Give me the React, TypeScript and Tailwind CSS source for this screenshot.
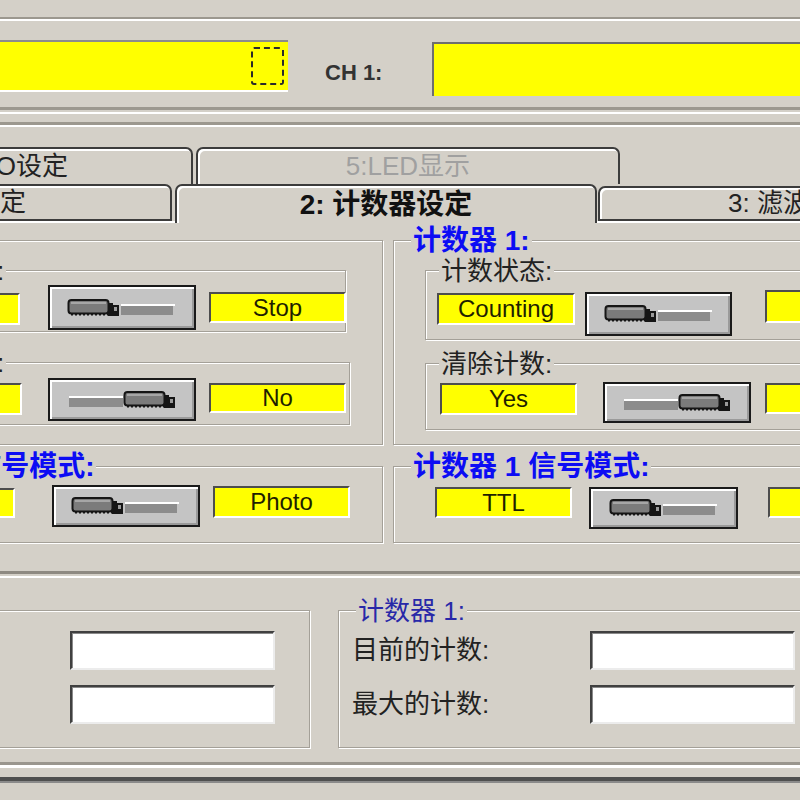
import React from "react";

const BG = "bg-[#d4d0c8]";

type BoxProps = {
  className?: string;
  children?: React.ReactNode;
};

const Slider = ({ on }: { on?: boolean }) => {
  const tx = on ? 56 : 0;
  return (
    <svg width="110" height="18" viewBox="0 0 110 18">
      {on ? (
        <>
          <rect x="2" y="5" width="54" height="2" fill="#fff" />
          <rect x="2" y="7" width="54" height="9" fill="#8c8c8c" />
        </>
      ) : (
        <>
          <rect x="54" y="5" width="54" height="2" fill="#fff" />
          <rect x="54" y="7" width="52" height="9" fill="#8c8c8c" />
        </>
      )}
      <g transform={`translate(${tx} 0)`}>
        <rect x="1.5" y="1" width="40" height="13.5" rx="3" fill="#7b7b7b" stroke="#151515" strokeWidth="2" />
        <rect x="4" y="3" width="35" height="2" fill="#a6a6a6" />
        <line x1="4" y1="15.5" x2="41" y2="15.5" stroke="#151515" strokeWidth="2" strokeDasharray="2 2" />
        <rect x="41" y="4" width="5" height="13" fill="#151515" />
        <rect x="46" y="6" width="6" height="11" fill="#151515" />
        <rect x="47" y="8" width="3" height="4" fill="#9a9a9a" />
      </g>
    </svg>
  );
};

const Field = ({ text, className }: { text?: string; className: string }) => (
  <div
    className={`flex shrink-0 items-center justify-center border-2 border-t-[#4d4d4d] border-l-[#4d4d4d] border-b-white border-r-white bg-[#ffff00] font-['Liberation_Sans',sans-serif] text-[24px] leading-none text-[#1f1f00] ${className}`}
  >
    {text}
  </div>
);

const Toggle = ({ on, className }: { on?: boolean; className: string }) => (
  <div
    className={`flex shrink-0 items-center justify-center border-2 border-[#1a1a1a] bg-[#c4c4c4] shadow-[inset_2px_2px_0_#fff,inset_-2px_-2px_0_#9a9a9a] ${className}`}
  >
    <Slider on={on} />
  </div>
);

const Input = () => (
  <div className="h-full w-[205px] shrink-0 border-2 border-t-[#404040] border-l-[#404040] border-b-[#ececec] border-r-[#ececec] bg-white shadow-[inset_1px_1px_0_#8a8a8a]" />
);

const Group = ({
  legend,
  legendClass = "",
  legendLeft = "left-[13px]",
  className,
  children,
}: BoxProps & { legend?: string; legendClass?: string; legendLeft?: string }) => (
  <div
    className={`relative shrink-0 border border-[#a4a098] shadow-[inset_1px_1px_0_#fff,1px_1px_0_#fff] ${className}`}
  >
    {legend && (
      <span
        className={`absolute top-0 -translate-y-1/2 whitespace-nowrap ${BG} px-[2px] leading-none ${legendLeft} ${legendClass}`}
      >
        {legend}
      </span>
    )}
    {children}
  </div>
);

const Tab = ({
  label,
  className,
}: {
  label: string;
  className: string;
}) => (
  <div
    className={`flex shrink-0 items-center overflow-hidden whitespace-nowrap rounded-t-[7px] border-2 border-[#3c3c3c] shadow-[inset_2px_2px_0_#fff] ${BG} ${className}`}
  >
    {label}
  </div>
);

const BLUE = "font-bold text-[28px] text-[#0c0cf4]";
const INNER = "text-[26px] text-[#222]";

const CountRow = ({ label }: { label: string }) => (
  <div className="flex h-[39px] items-center">
    <span className="ml-[13px] w-[238px] shrink-0 whitespace-nowrap text-[26px] text-[#222]">{label}</span>
    <Input />
  </div>
);

export default function App() {
  return (
    <div
      className={`h-[800px] w-[800px] overflow-hidden ${BG} font-['Liberation_Sans','Noto_Sans_CJK_SC',sans-serif]`}
    >
      {/* channel readouts */}
      <div className="h-[17px]" />
      <div className="h-[2px] bg-[#9c988f]" />
      <div className="h-[2px] bg-white" />
      <div className="h-[19px]" />
      <div className="flex h-[56px] items-start">
        <div className="ml-[-12px] flex h-[52px] w-[300px] shrink-0 items-center justify-end border-y-2 border-t-[#8c8c8c] border-b-white bg-[#ffff00] pr-[4px]">
          <div className="h-[38px] w-[33px] rounded-[3px] border-2 border-dashed border-[#2a2a2a]" />
        </div>
        <div className="ml-[37px] w-[107px] shrink-0 self-center pt-[8px] text-[22px] font-bold text-[#333]">
          CH 1:
        </div>
        <div className="mt-[2px] h-[54px] w-[380px] shrink-0 border-l-2 border-t-2 border-[#6e6e6e] bg-[#ffff00]" />
      </div>
      <div className="h-[11px]" />
      <div className="h-[3px] bg-[#9c988f]" />
      <div className="h-[2px]" />
      <div className="h-[2px] bg-white" />
      <div className="h-[8px]" />
      <div className="h-[3px] bg-[#9c988f]" />
      <div className="h-[2px] bg-white" />

      {/* tabs */}
      <div className="h-[20px]" />
      <div className="flex h-[37px] items-start text-[26px]">
        <Tab label="4: I/O设定" className="ml-[-20px] h-[37px] w-[213px] justify-end border-b-0 pr-[123px] text-[#222]" />
        <Tab label="5:LED显示" className="ml-[3px] h-[37px] w-[424px] justify-center border-b-0 text-[#a0a0a0]" />
      </div>
      <div className="flex h-[37px] items-start text-[26px]">
        <Tab label="1: 通道设定" className="ml-[-20px] h-[37px] w-[192px] justify-end pr-[144px] text-[#222]" />
        <Tab
          label="2: 计数器设定"
          className="relative z-10 ml-[3px] h-[39px] w-[422px] justify-center border-b-0 text-[28px] font-bold text-[#111]"
        />
        <Tab label="3: 滤波器设定" className="ml-[1px] mt-[2px] h-[35px] w-[230px] pl-[128px] text-[#222]" />
      </div>

      {/* tab page */}
      <div className="h-[353px] border-t-2 border-b-[3px] border-t-white border-b-[#8e8a82]">
        <div className="mt-[17px] flex items-start">
          <Group legend="计数器 0:" legendClass={BLUE} legendLeft="left-[17px]" className="ml-[-162px] h-[205px] w-[545px]">
            <Group legend="计数状态:" legendClass={INNER} legendLeft="left-[20px]" className="ml-[31px] mt-[29px] h-[62px] w-[476px]">
              <div className="flex items-start">
                <Field className="ml-[11px] mt-[22px] h-[32px] w-[138px]" />
                <Toggle className="ml-[28px] mt-[14px] h-[45px] w-[148px]" />
                <Field text="Stop" className="ml-[13px] mt-[21px] h-[31px] w-[137px]" />
              </div>
            </Group>
            <Group legend="清除计数:" legendClass={INNER} legendLeft="left-[20px]" className="ml-[31px] mt-[30px] h-[63px] w-[480px]">
              <div className="flex items-start">
                <Field className="ml-[11px] mt-[20px] h-[32px] w-[140px]" />
                <Toggle on className="ml-[26px] mt-[15px] h-[43px] w-[148px]" />
                <Field text="No" className="ml-[13px] mt-[20px] h-[30px] w-[137px]" />
              </div>
            </Group>
          </Group>
          <Group legend="计数器 1:" legendClass={BLUE} legendLeft="left-[17px]" className="ml-[10px] h-[205px] w-[420px]">
            <Group legend="计数状态:" legendClass={INNER} className="ml-[31px] mt-[29px] h-[70px] w-[400px]">
              <div className="flex items-start">
                <Field text="Counting" className="ml-[11px] mt-[22px] h-[32px] w-[138px]" />
                <Toggle className="ml-[10px] mt-[21px] h-[44px] w-[147px]" />
                <Field className="ml-[33px] mt-[19px] h-[33px] w-[138px]" />
              </div>
            </Group>
            <Group legend="清除计数:" legendClass={INNER} className="ml-[31px] mt-[23px] h-[67px] w-[400px]">
              <div className="flex items-start">
                <Field text="Yes" className="ml-[14px] mt-[19px] h-[32px] w-[137px]" />
                <Toggle on className="ml-[26px] mt-[18px] h-[41px] w-[148px]" />
                <Field className="ml-[14px] mt-[19px] h-[31px] w-[138px]" />
              </div>
            </Group>
          </Group>
        </div>

        <div className="mt-[21px] flex items-start">
          <Group legend="计数器 0 信号模式:" legendClass={BLUE} legendLeft="left-[17px]" className="ml-[-162px] h-[77px] w-[545px]">
            <div className="flex items-start">
              <Field className="ml-[38px] mt-[21px] h-[30px] w-[138px]" />
              <Toggle className="ml-[37px] mt-[18px] h-[42px] w-[148px]" />
              <Field text="Photo" className="ml-[13px] mt-[19px] h-[32px] w-[137px]" />
            </div>
          </Group>
          <Group legend="计数器 1 信号模式:" legendClass={BLUE} legendLeft="left-[17px]" className="ml-[10px] h-[77px] w-[420px]">
            <div className="flex items-start">
              <Field text="TTL" className="ml-[41px] mt-[20px] h-[31px] w-[137px]" />
              <Toggle className="ml-[17px] mt-[20px] h-[42px] w-[149px]" />
              <Field className="ml-[30px] mt-[20px] h-[31px] w-[138px]" />
            </div>
          </Group>
        </div>
      </div>
      <div className="mt-[2px] h-[2px] bg-white" />

      {/* counter readouts */}
      <div className="mt-[32px] flex items-start">
        <Group legend="计数器 0:" legendClass="text-[26px] text-[#2828a8]" legendLeft="left-[17px]" className="ml-[-182px] h-[138px] w-[492px]">
          <div className="mt-[20px]">
            <CountRow label="目前的计数:" />
          </div>
          <div className="mt-[15px]">
            <CountRow label="最大的计数:" />
          </div>
        </Group>
        <Group legend="计数器 1:" legendClass="text-[26px] text-[#2828a8]" legendLeft="left-[17px]" className="ml-[28px] h-[138px] w-[480px]">
          <div className="mt-[20px]">
            <CountRow label="目前的计数:" />
          </div>
          <div className="mt-[15px]">
            <CountRow label="最大的计数:" />
          </div>
        </Group>
      </div>

      <div className="h-[14px]" />
      <div className="h-[3px] bg-[#9a968e]" />
      <div className="h-[3px] bg-white" />
      <div className="h-[9px]" />
      <div className="h-[4px] bg-[#4f4f4f]" />
      <div className="h-[2px] bg-[#8a8a8a]" />
    </div>
  );
}
